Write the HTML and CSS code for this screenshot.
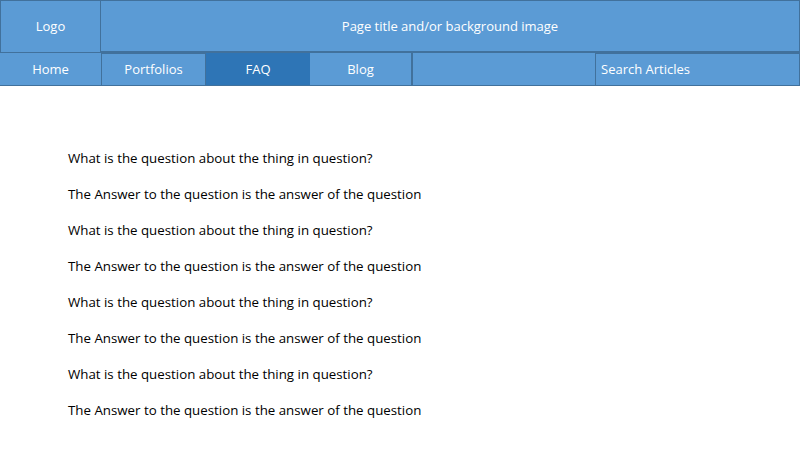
FILE: index.html
```html
<!DOCTYPE html>
<html>
<head>
<meta charset="utf-8">
<link rel="stylesheet" href="styles.css">
</head>
<body>
<header class="top">
  <div class="logo">Logo</div>
  <div class="title">Page title and/or background image</div>
</header>
<nav class="menu">
  <div class="item home">Home</div>
  <div class="item boxed portfolios">Portfolios</div>
  <div class="item active faq">FAQ</div>
  <div class="item blog">Blog</div>
  <div class="item spacer"></div>
  <div class="item boxed search">Search Articles</div>
</nav>
<main class="faq-list">
  <p>What is the question about the thing in question?</p>
  <p>The Answer to the question is the answer of the question</p>
  <p>What is the question about the thing in question?</p>
  <p>The Answer to the question is the answer of the question</p>
  <p>What is the question about the thing in question?</p>
  <p>The Answer to the question is the answer of the question</p>
  <p>What is the question about the thing in question?</p>
  <p>The Answer to the question is the answer of the question</p>
</main>
</body>
</html>
```

FILE: styles.css
```css
* { box-sizing: border-box; }
html, body { margin: 0; padding: 0; background: #fff; }
body {
  font-family: "Open Sans", "Liberation Sans", sans-serif;
  font-size: 13px;
  color: #000;
  width: 800px;
  height: 450px;
  overflow: hidden;
}
.top {
  display: flex;
  height: 53px;
  background: #5b9bd5;
  color: #fff;
}
.logo {
  width: 101px;
  border: 1px solid #41719c;
  display: flex;
  align-items: center;
  justify-content: center;
  padding-bottom: 1px;
}
.title {
  flex: 1;
  border: 1px solid #41719c;
  border-bottom-width: 2px;
  border-left: none;
  display: flex;
  align-items: center;
  justify-content: center;
}
.menu {
  display: flex;
  height: 33px;
  background: #5b9bd5;
  color: #fff;
  border-bottom: 1px solid #41719c;
}
.item {
  display: flex;
  align-items: center;
  justify-content: center;
  height: 32px;
}
.home { width: 101px; }
.boxed { border: 1px solid #41719c; height: 33px; padding-bottom: 1px; }
.portfolios { width: 105px; }
.faq { width: 104px; }
.active { background: #2e75b6; }
.blog { width: 103px; border-right: 2px solid #41719c; }
.spacer { width: 182px; }
.search { flex: 1; justify-content: flex-start; padding-left: 5px; }
.faq-list {
  padding: 64px 0 0 68px;
  font-size: 13.3px;
}
.faq-list p {
  margin: 0;
  height: 36px;
  line-height: 16px;
}
```
